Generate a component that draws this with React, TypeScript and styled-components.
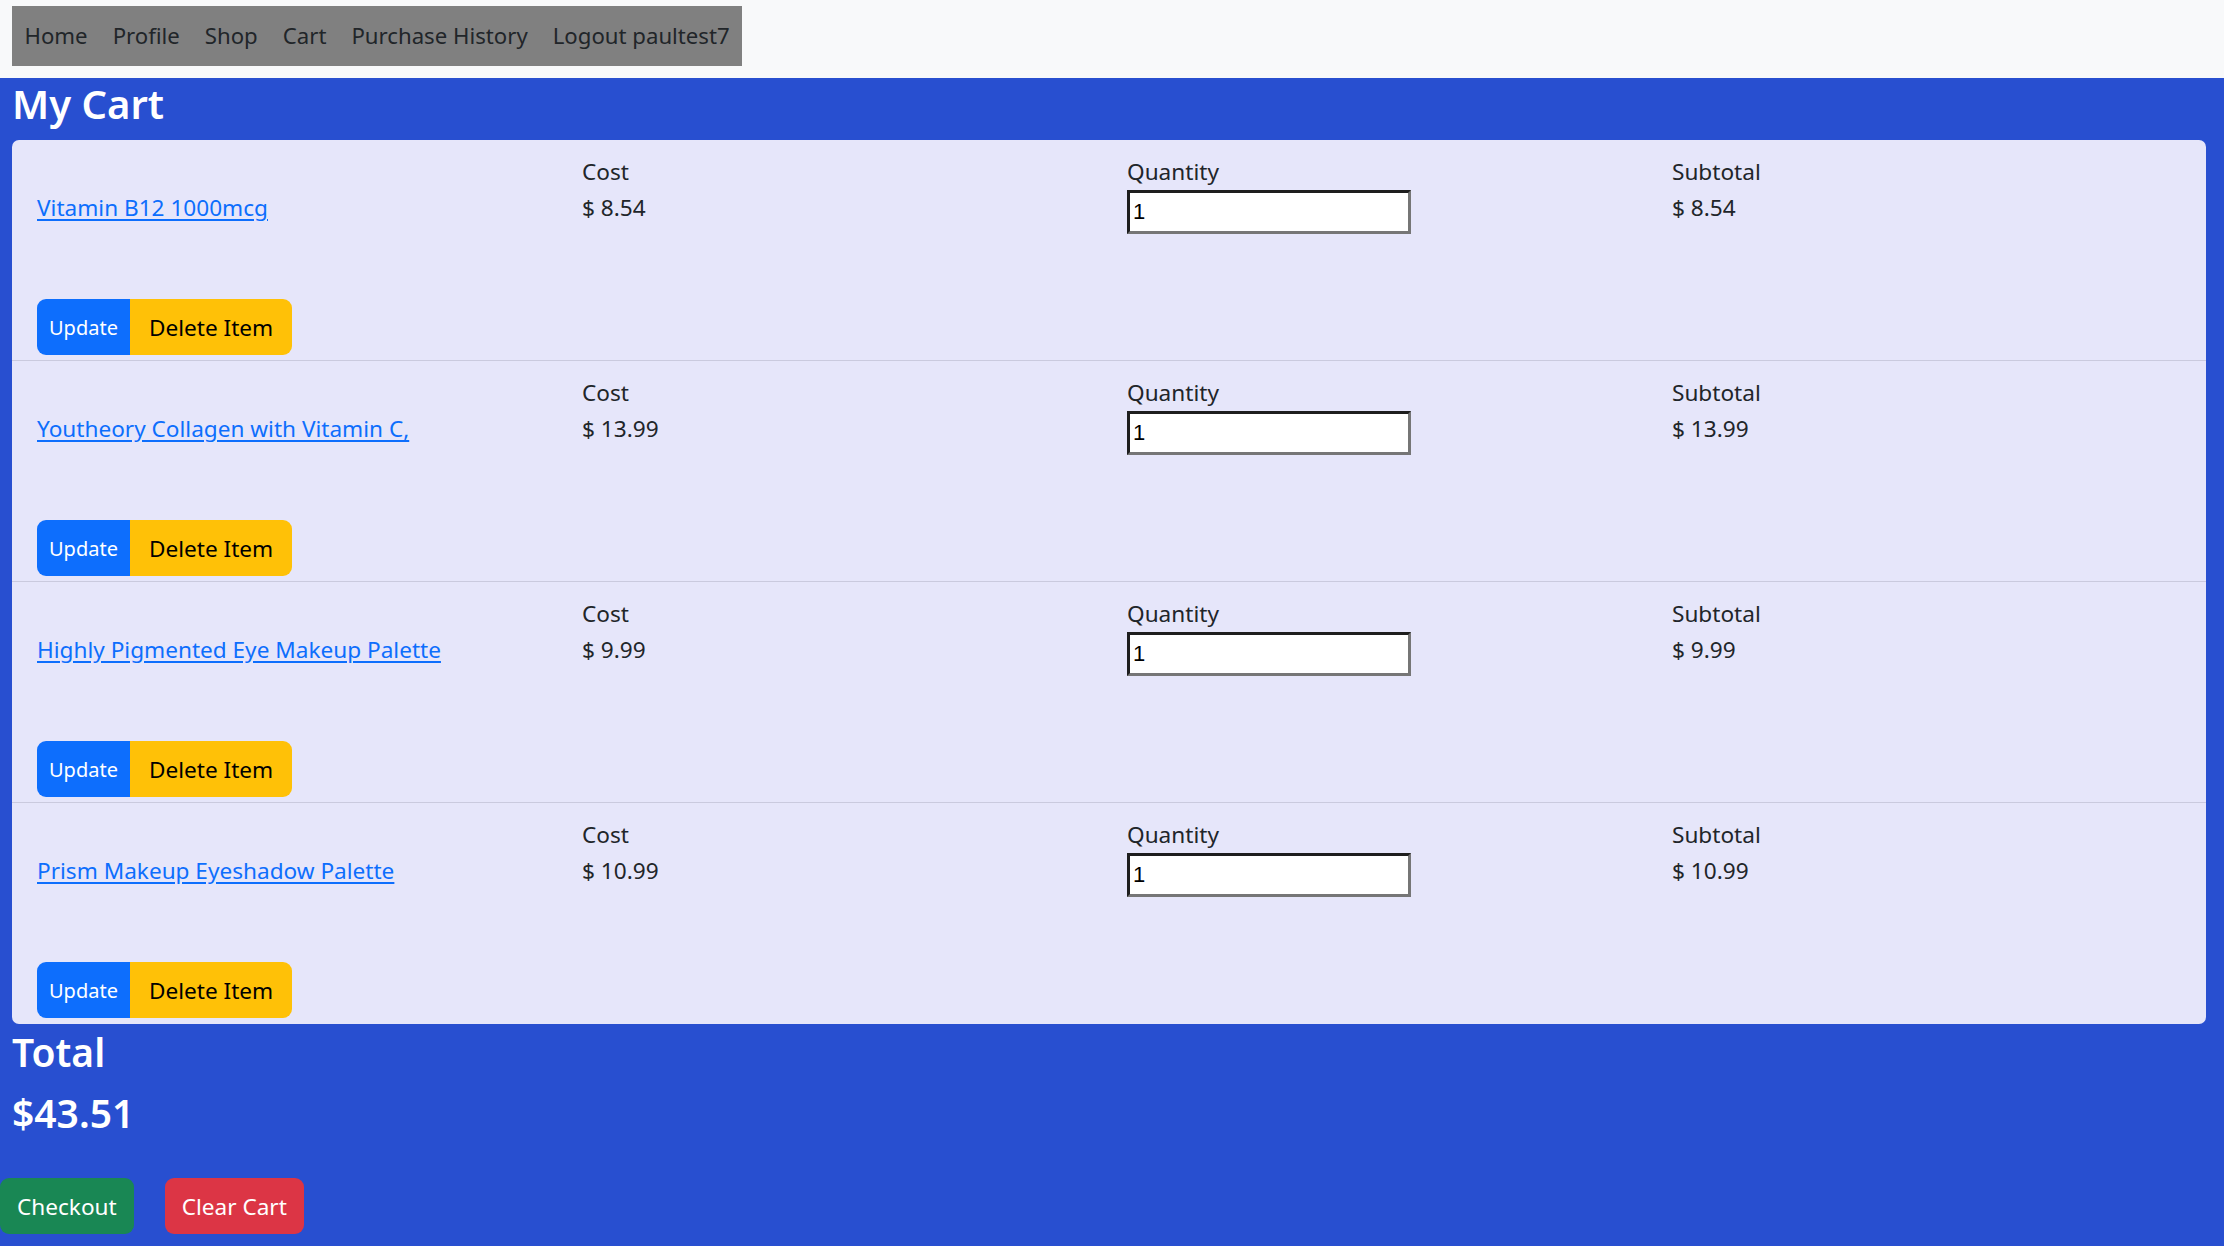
import React from "react";
import styled, { createGlobalStyle } from "styled-components";

const GlobalStyle = createGlobalStyle`
  html, body {
    margin: 0;
    padding: 0;
    background: #284fd0;
  }
  body {
    font-family: "Noto Sans", "Open Sans", sans-serif;
    font-size: 22.6px;
    line-height: 36px;
    color: #212529;
    min-height: 1246px;
  }
  * { box-sizing: border-box; }
`;

const Header = styled.header`
  background: #f8f9fa;
  height: 78px;
  padding: 6px 12px 0;
`;

const Nav = styled.nav`
  display: inline-flex;
  align-items: center;
  height: 60px;
  background: #808080;
`;

const NavLink = styled.a`
  padding: 0 12.5px;
  color: #212529;
  text-decoration: none;
  font-size: 22.2px;
  line-height: 36px;
  cursor: pointer;
`;

const Main = styled.main`
  padding: 0 18px 0 12px;
`;

const Heading = styled.h3`
  margin: 0 0 10px;
  font-size: 40px;
  line-height: 52px;
  font-weight: 600;
  color: #ffffff;
`;

const Card = styled.section`
  background: #e6e6fa;
  border-radius: 7px;
  overflow: hidden;
`;

const ItemRow = styled.div`
  padding: 14px 25px 5px;
  border-bottom: 1px solid #cacade;
  &:last-child {
    border-bottom: none;
    padding-bottom: 6px;
  }
`;

const Columns = styled.div`
  display: grid;
  grid-template-columns: repeat(4, 1fr);
  margin: 0 -18px;
`;

const Col = styled.div`
  padding: 0 18px;
  display: flex;
  flex-direction: column;
  align-items: flex-start;
`;

const Label = styled.div`
  height: 36px;
  line-height: 36px;
`;

const Value = styled.div`
  line-height: 36px;
`;

const ItemLink = styled.a`
  color: #0d6efd;
  text-decoration: underline;
  text-underline-offset: 3px;
  line-height: 36px;
  cursor: pointer;
`;

const QtyInput = styled.input`
  width: 284px;
  height: 44px;
  border: 3px solid;
  border-color: #1e1e1e #767676 #767676 #1e1e1e;
  background: #ffffff;
  padding: 0 3px;
  font-family: "Liberation Sans", Arial, sans-serif;
  font-size: 22px;
  color: #000;
  outline: none;
`;

const Actions = styled.div`
  display: flex;
  margin-top: 65px;
`;

const UpdateButton = styled.button`
  height: 56px;
  padding: 0 12px;
  border: none;
  border-radius: 9px 0 0 9px;
  background: #0d6efd;
  color: #fff;
  font-family: "Noto Sans", sans-serif;
  font-size: 20px;
  cursor: pointer;
`;

const DeleteButton = styled.button`
  height: 56px;
  padding: 0 19px;
  border: none;
  border-radius: 0 9px 9px 0;
  background: #ffc107;
  color: #000;
  font-family: "Noto Sans", sans-serif;
  font-size: 22.6px;
  cursor: pointer;
`;

const TotalHeading = styled.h3`
  margin: 0;
  font-size: 39px;
  line-height: 56px;
  font-weight: 600;
  color: #fff;
`;

const Amount = styled.h4`
  margin: 5px 0 0;
  font-size: 39px;
  line-height: 56px;
  font-weight: 600;
  color: #fff;
`;

const Footer = styled.div`
  display: flex;
  gap: 31px;
  margin: 37px 0 0 -12px;
`;

const ActionButton = styled.button<{ $tone: "green" | "red" }>`
  height: 56px;
  padding: 0 17px;
  border: none;
  border-radius: 9px;
  background: ${(p) => (p.$tone === "green" ? "#198754" : "#dc3545")};
  color: #fff;
  font-family: "Noto Sans", sans-serif;
  font-size: 22.6px;
  cursor: pointer;
`;

const items = [
  { name: "Vitamin B12 1000mcg", cost: 8.54, qty: 1 },
  { name: "Youtheory Collagen with Vitamin C,", cost: 13.99, qty: 1 },
  { name: "Highly Pigmented Eye Makeup Palette", cost: 9.99, qty: 1 },
  { name: "Prism Makeup Eyeshadow Palette", cost: 10.99, qty: 1 },
];

export default function App() {
  const total = items.reduce((s, i) => s + i.cost * i.qty, 0);
  return (
    <>
      <GlobalStyle />
      <Header>
        <Nav>
          {["Home", "Profile", "Shop", "Cart", "Purchase History", "Logout paultest7"].map((l) => (
            <NavLink key={l}>{l}</NavLink>
          ))}
        </Nav>
      </Header>
      <Main>
        <Heading>My Cart</Heading>
        <Card>
          {items.map((it) => (
            <ItemRow key={it.name}>
              <Columns>
                <Col>
                  <Label />
                  <ItemLink>{it.name}</ItemLink>
                </Col>
                <Col>
                  <Label>Cost</Label>
                  <Value>$ {it.cost.toFixed(2)}</Value>
                </Col>
                <Col>
                  <Label>Quantity</Label>
                  <QtyInput type="text" defaultValue={String(it.qty)} />
                </Col>
                <Col>
                  <Label>Subtotal</Label>
                  <Value>$ {(it.cost * it.qty).toFixed(2)}</Value>
                </Col>
              </Columns>
              <Actions>
                <UpdateButton>Update</UpdateButton>
                <DeleteButton>Delete Item</DeleteButton>
              </Actions>
            </ItemRow>
          ))}
        </Card>
        <TotalHeading>Total</TotalHeading>
        <Amount>${total.toFixed(2)}</Amount>
        <Footer>
          <ActionButton $tone="green">Checkout</ActionButton>
          <ActionButton $tone="red">Clear Cart</ActionButton>
        </Footer>
      </Main>
    </>
  );
}
